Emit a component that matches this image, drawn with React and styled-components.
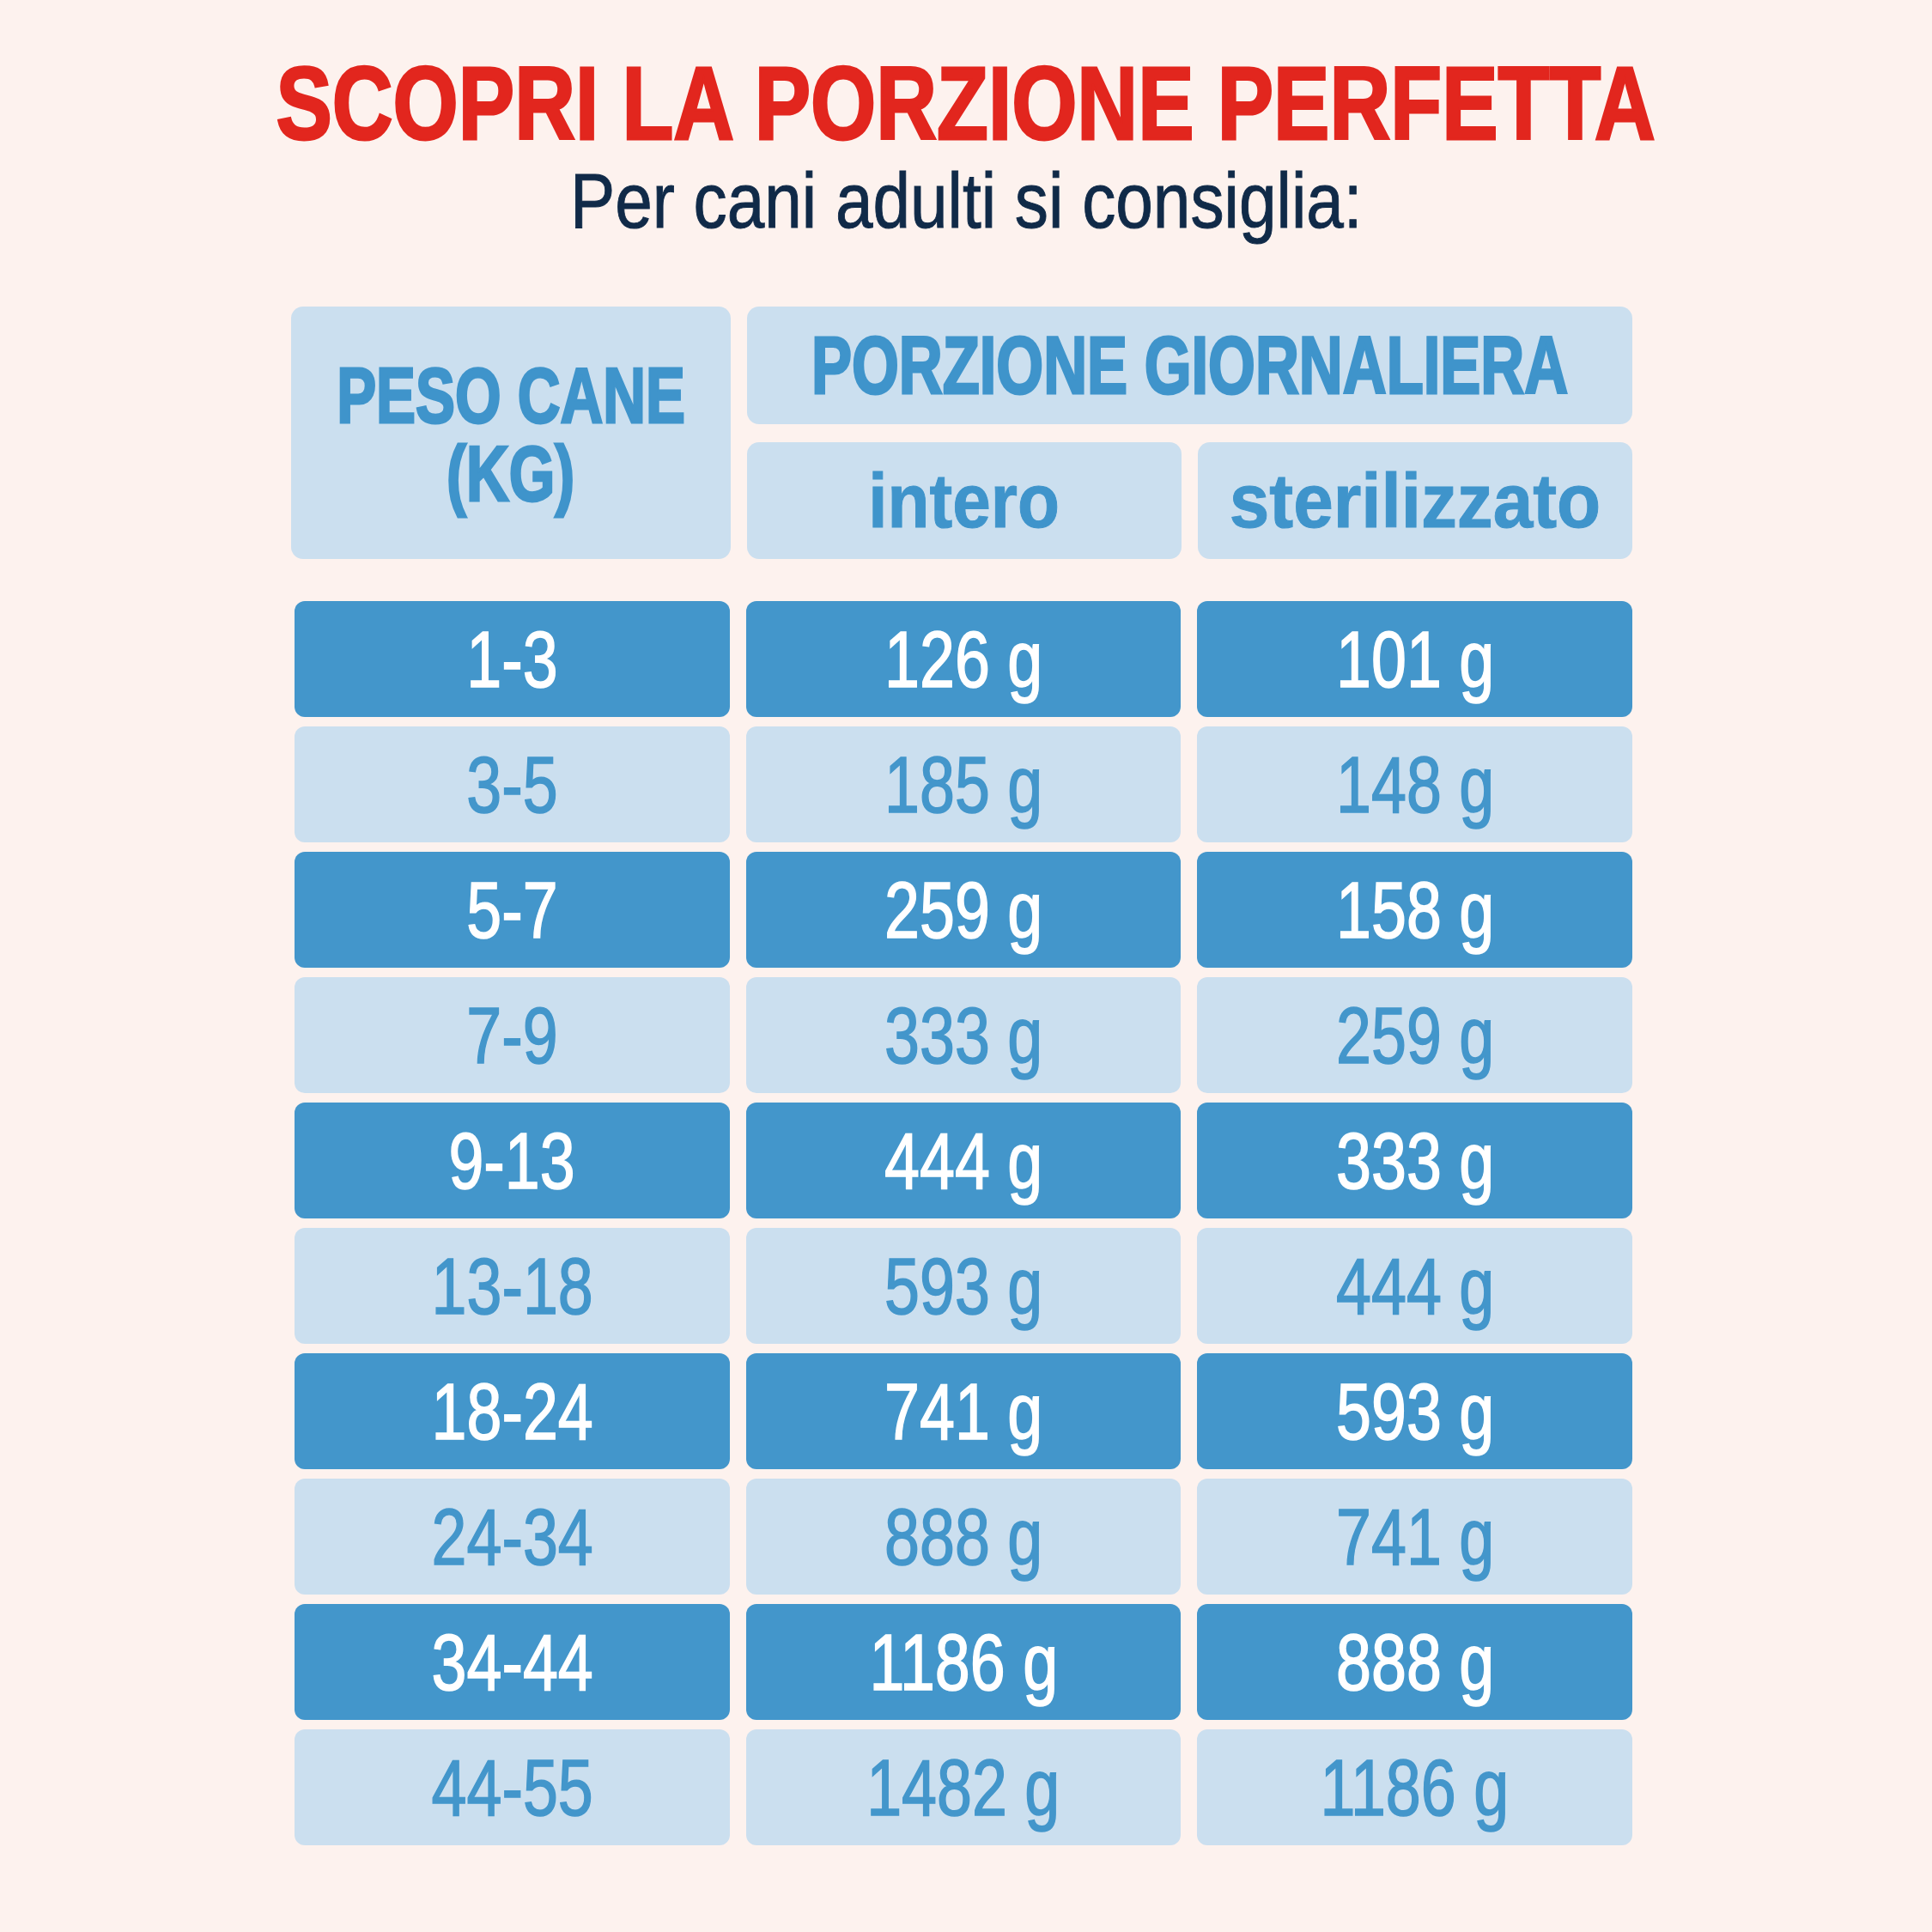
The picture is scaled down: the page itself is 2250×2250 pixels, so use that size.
import React from "react";
import styled, { createGlobalStyle } from "styled-components";

const Global = createGlobalStyle`
  html, body { margin: 0; padding: 0; }
  body { background: #fdf2ee; }
`;

const Page = styled.div`
  width: 2250px;
  height: 2250px;
  background: #fdf2ee;
  display: flex;
  flex-direction: column;
  align-items: center;
  font-family: "Liberation Sans", Arial, sans-serif;
  box-sizing: border-box;
  padding-top: 60px;
`;

const Squeeze = styled.span`
  display: inline-block;
  white-space: nowrap;
  transform: scaleX(${(p) => p.$x});
  transform-origin: center;
  -webkit-text-stroke: ${(p) => p.$stroke || 0}px currentColor;
`;

const Title = styled.h1`
  margin: 0;
  font-size: 121px;
  line-height: 1;
  font-weight: 700;
  color: #e2261e;
`;

const Subtitle = styled.h2`
  margin: 8px 0 0;
  font-size: 90px;
  line-height: 1;
  font-weight: 400;
  color: #102a48;
`;

const Table = styled.div`
  margin-top: 78px;
  margin-left: -6px;
  width: 1558px;
  display: grid;
  grid-template-columns: repeat(3, 1fr);
  column-gap: 19px;
  row-gap: 11px;
`;

const HeaderGrid = styled.div`
  grid-column: 1 / 4;
  display: grid;
  grid-template-columns: 512px 1fr 1fr;
  grid-template-rows: 137px 136px;
  column-gap: 19px;
  row-gap: 21px;
  margin: 0 0 38px -4px;
`;

const HeadCell = styled.div`
  background: #cbdfef;
  border-radius: 14px;
  display: flex;
  flex-direction: column;
  align-items: center;
  justify-content: center;
  text-align: center;
  color: #3f94cb;
  font-weight: 700;
  font-size: ${(p) => p.$size || 91}px;
  line-height: 1;
  gap: ${(p) => p.$gap || 0}px;
  padding-top: ${(p) => p.$shift || 0}px;
  grid-column: ${(p) => p.$col || "auto"};
  grid-row: ${(p) => p.$row || "auto"};
`;

const Cell = styled.div`
  height: 135px;
  border-radius: 12px;
  background: ${(p) => (p.$dark ? "#4396cb" : "#cbdfef")};
  color: ${(p) => (p.$dark ? "#ffffff" : "#4396cb")};
  display: flex;
  align-items: center;
  justify-content: center;
  font-size: 92px;
  font-weight: 400;
  line-height: 1;
`;

const rows = [
  ["1-3", "126 g", "101 g"],
  ["3-5", "185 g", "148 g"],
  ["5-7", "259 g", "158 g"],
  ["7-9", "333 g", "259 g"],
  ["9-13", "444 g", "333 g"],
  ["13-18", "593 g", "444 g"],
  ["18-24", "741 g", "593 g"],
  ["24-34", "888 g", "741 g"],
  ["34-44", "1186 g", "888 g"],
  ["44-55", "1482 g", "1186 g"],
];

export default function App() {
  return (
    <>
      <Global />
      <Page>
        <Title>
          <Squeeze $x={0.81} $stroke={3}>SCOPRI LA PORZIONE PERFETTA</Squeeze>
        </Title>
        <Subtitle>
          <Squeeze $x={0.87} $stroke={1}>Per cani adulti si consiglia:</Squeeze>
        </Subtitle>
        <Table>
          <HeaderGrid>
            <HeadCell $col="1" $row="1 / 3" $shift={4} $gap={0}>
              <Squeeze $x={0.757} $stroke={3}>PESO CANE</Squeeze>
              <Squeeze $x={0.757} $stroke={3}>(KG)</Squeeze>
            </HeadCell>
            <HeadCell $col="2 / 4" $row="1" $size={94}>
              <Squeeze $x={0.75} $stroke={3}>PORZIONE GIORNALIERA</Squeeze>
            </HeadCell>
            <HeadCell $col="2" $row="2" $size={89}>
              <Squeeze $x={0.9} $stroke={1}>intero</Squeeze>
            </HeadCell>
            <HeadCell $col="3" $row="2" $size={89}>
              <Squeeze $x={0.94} $stroke={1}>sterilizzato</Squeeze>
            </HeadCell>
          </HeaderGrid>
          {rows.map((r, i) =>
            r.map((v, j) => (
              <Cell key={`${i}-${j}`} $dark={i % 2 === 0}>
                <Squeeze $x={0.8} $stroke={1.6}>{v}</Squeeze>
              </Cell>
            ))
          )}
        </Table>
      </Page>
    </>
  );
}
